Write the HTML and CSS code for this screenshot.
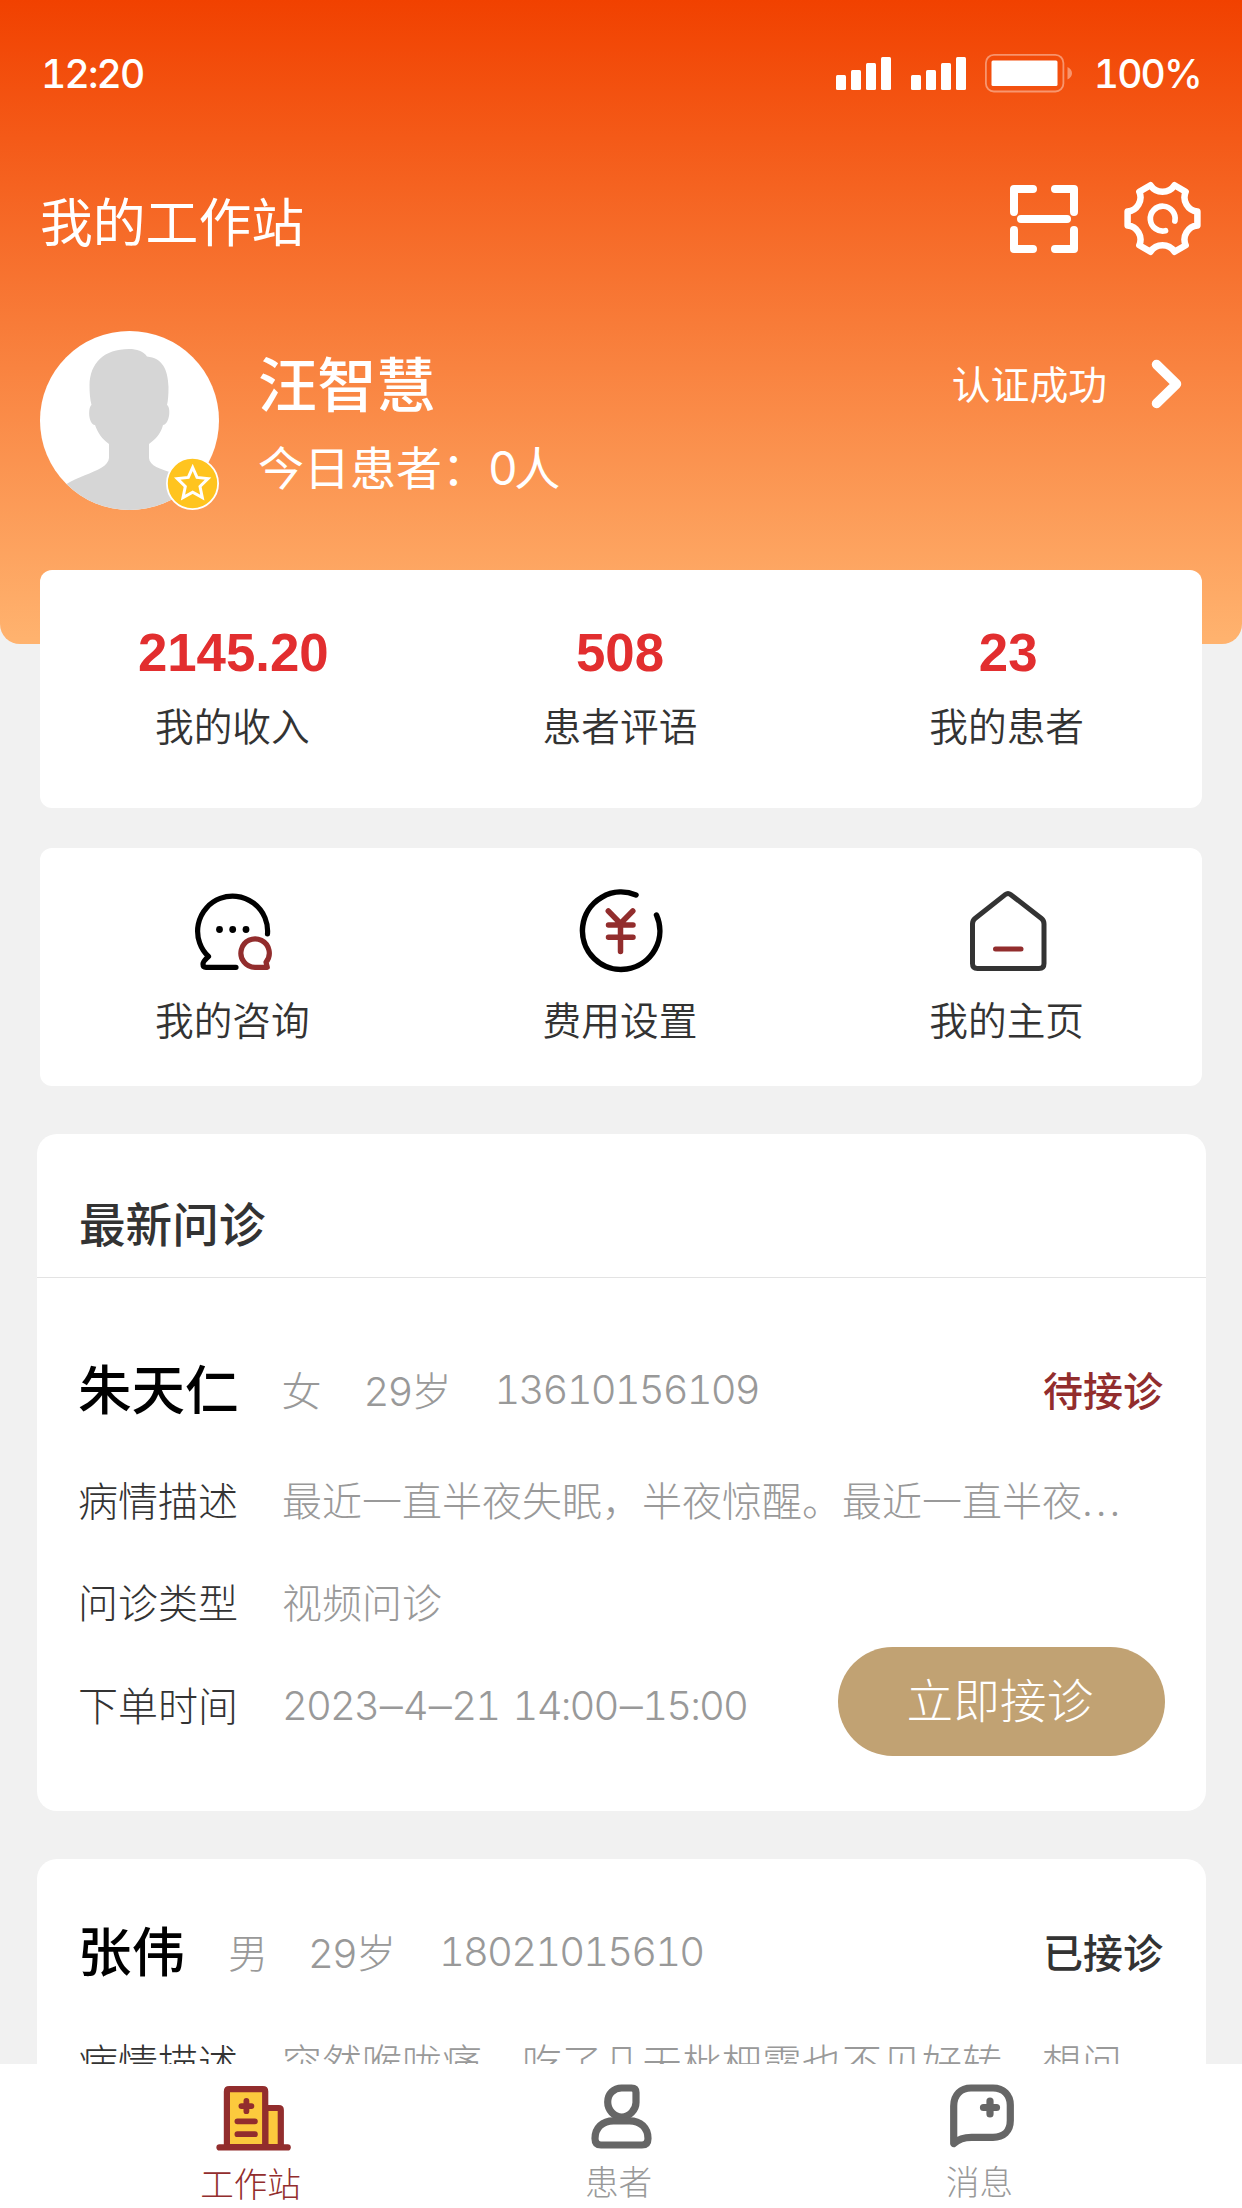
FILE: index.html
```html
<!DOCTYPE html>
<html lang="zh-CN">
<head>
<meta charset="utf-8">
<title>我的工作站</title>
<link rel="stylesheet" href="styles.css">
</head>
<body>
<div class="app">
  <header class="hero">
    <div class="status">
      <span class="time">12:20</span>
      <div class="status-right">
        <svg width="130" height="33" viewBox="0 0 130 33" fill="#fff">
          <g id="bars"><rect y="18" width="10" height="15" rx="1.5"/><rect x="15" y="13" width="10" height="20" rx="1.5"/><rect x="30" y="6" width="10" height="27" rx="1.5"/><rect x="45" width="10" height="33" rx="1.5"/></g>
          <use href="#bars" x="75"/>
        </svg>
        <svg class="battery" width="89" height="39" viewBox="0 0 89 39">
          <rect x=".9" y=".9" width="77.5" height="36.6" rx="8" fill="none" stroke="#fff" stroke-opacity=".4" stroke-width="1.8"/>
          <rect x="6.5" y="6.5" width="66" height="25.5" rx="1.5" fill="#fff"/>
          <path d="M82.5 13c6 2.500 6 10 0 12.500z" fill="#fff" fill-opacity=".4"/>
        </svg>
        <span class="percent">100%</span>
      </div>
    </div>
    <div class="titlebar">
      <h1>我的工作站</h1>
      <div class="actions">
        <svg width="70" height="70" viewBox="0 0 70 70" fill="none" stroke="#fff" stroke-width="8" stroke-linecap="round" stroke-linejoin="round">
          <path d="M5 28V5H24M46 5H65V28M65 46V65H46M24 65H5V46M12 35H58"/>
        </svg>
        <svg width="78" height="76" viewBox="-39.500 -37.500 78 76" fill="none" stroke="#fff" stroke-width="6.500" stroke-linecap="round" stroke-linejoin="round">
          <path d="M12-33.300L23.200-26.800A14.200 14.200 0 0 0 34.900-7V7A14.200 14.200 0 0 0 23.200 26.800L12 33.300A14.300 14.300 0 0 0-12 33.300L-23.200 26.800A14.200 14.200 0 0 0-34.900 7V-7A14.200 14.200 0 0 0-23.200-26.800L-12-33.300A14.300 14.300 0 0 0 12-33.300z"/>
          <path d="M12.400 2.500A12.400 12.400 0 1 0 3 12.200" stroke-width="5.700"/>
        </svg>
      </div>
    </div>
    <div class="profile">
      <div class="avatar">
        <svg width="179" height="179" viewBox="0 0 179 179">
          <defs><clipPath id="round"><circle cx="89.500" cy="89.500" r="89.500"/></clipPath></defs>
          <circle cx="89.500" cy="89.500" r="89.500" fill="#fff"/>
          <path clip-path="url(#round)" fill="#d6d6d6" d="M89 18C97 18 103 20 107 25.500C122 27 128 38 128.500 56C128.500 64 128 70 127 74C131 76 130 93 123 94C121 102 116 108 109 113V127C110 143 152 138 165 166V179H14V166C24 144 68 143 69 127V113C62 108 58 102 55 94C48 93 48 76 51.500 74C50 68 49.500 62 49.500 54C50 32 64 18 89 18z"/>
        </svg>
        <svg class="badge" width="53" height="53" viewBox="0 0 53 53">
          <circle cx="26.500" cy="26.500" r="25.600" fill="#ffc41f" stroke="#fff" stroke-width="1.800"/>
          <path d="M26.700 10.500L31 20.400L42 21.600L34 29.500L36.300 40.500L26.700 35.200L17 40.500L19.300 29.500L11.300 21.600L22.300 20.400z" fill="none" stroke="#fff" stroke-width="3"/>
        </svg>
      </div>
      <div class="who">
        <div class="doctor">汪智慧</div>
        <div class="today">今日患者：<span class="num">0</span>人</div>
      </div>
      <div class="cert">
        <span>认证成功</span>
        <svg width="34" height="52" viewBox="0 0 34 52" fill="none" stroke="#fff" stroke-width="9.500" stroke-linecap="round" stroke-linejoin="round"><path d="M6.500 6.500L26.500 26L6.500 45.500"/></svg>
      </div>
    </div>
  </header>

  <section class="panel stats">
    <div class="cell"><strong>2145.20</strong><span>我的收入</span></div>
    <div class="cell"><strong>508</strong><span>患者评语</span></div>
    <div class="cell"><strong class="count">23</strong><span>我的患者</span></div>
  </section>

  <section class="panel tools">
    <div class="cell">
      <svg width="84" height="84" viewBox="191 888 84 84" fill="none" stroke-width="5.200" stroke-linecap="round" stroke-linejoin="round">
        <path stroke="#000" d="M267.500 933A35 35 0 1 0 208.500 955.500C205 959 203 960.500 203 963Q203 966.300 206 966.300H236"/>
        <g fill="#000"><circle cx="219.500" cy="928.500" r="3.400"/><circle cx="232.700" cy="928.500" r="3.400"/><circle cx="246" cy="928.500" r="3.400"/></g>
        <path stroke="#922d2d" d="M255 966.300A14.200 14.200 0 1 1 266 961.200L267.300 966.300z"/>
      </svg>
      <span>我的咨询</span>
    </div>
    <div class="cell">
      <svg width="90" height="84" viewBox="575.500 888.500 90 84" fill="none" stroke-width="5.500" stroke-linecap="round" stroke-linejoin="round">
        <path stroke="#000" d="M636.500 894.500A38.700 38.700 0 1 0 657 914.500"/>
        <path stroke="#922d2d" d="M608.800 910.500L621 923L633.300 910.500M609 924.600H633.500M609 936.700H633.500M621 923V951"/>
      </svg>
      <span>费用设置</span>
    </div>
    <div class="cell">
      <svg width="84" height="84" viewBox="965.500 889 84 84" fill="none" stroke-width="5" stroke-linecap="round" stroke-linejoin="round">
        <path stroke="#333" d="M1006 894.400Q1008.500 892.500 1011 894.400L1042 918.500Q1044.500 920.500 1044.500 924V963.500Q1044.500 968.500 1039.500 968.500H978Q973 968.500 973 963.500V924Q973 920.500 975.500 918.500z"/>
        <path stroke="#922d2d" d="M996 949H1021.500"/>
      </svg>
      <span>我的主页</span>
    </div>
  </section>

  <section class="card first">
    <h2>最新问诊</h2>
    <div class="patient">
      <b>朱天仁</b><span class="sex">女</span><span class="age"><span class="num">29</span>岁</span><span class="num">13610156109</span>
      <em class="pending">待接诊</em>
    </div>
    <div class="line"><label>病情描述</label><p>最近一直半夜失眠，半夜惊醒。最近一直半夜<span class="dots">...</span></p></div>
    <div class="line type"><label>问诊类型</label><p>视频问诊</p></div>
    <div class="line order"><label>下单时间</label><p class="date num">2023<i>–</i>4<i>–</i>21 14:00<i>–</i>15:00</p><button>立即接诊</button></div>
  </section>

  <section class="card second">
    <div class="patient">
      <b>张伟</b><span class="sex">男</span><span class="age"><span class="num">29</span>岁</span><span class="num">18021015610</span>
      <em>已接诊</em>
    </div>
    <div class="line"><label>病情描述</label><p>突然喉咙痛，吃了几天枇杷露也不见好转，想问</p></div>
  </section>

  <nav class="tabs">
    <div class="tab active">
      <svg width="76" height="68" viewBox="214.500 2084 76 68" stroke="#922d2d" stroke-width="6.200" stroke-linecap="round" stroke-linejoin="round">
        <path fill="#fcca3d" d="M264.700 2108H278.300Q280.300 2108 280.300 2110V2147H264.700z"/>
        <path fill="#fcca3d" d="M226.400 2147V2091.500Q226.400 2089.200 228.800 2089.200H262.300Q264.700 2089.200 264.700 2091.500V2147z"/>
        <path fill="none" d="M219 2147.400H287.200"/>
        <path fill="none" stroke-width="5.800" d="M245.900 2101V2111.200M240.900 2106.100H250.900M236.900 2121.300H254.400M236.900 2134.200H254.400"/>
      </svg>
      <span>工作站</span>
    </div>
    <div class="tab">
      <svg width="76" height="68" viewBox="582.500 2083.500 76 68" fill="none" stroke="#666" stroke-width="7.200" stroke-linecap="round" stroke-linejoin="round">
        <path d="M621 2088.500H631Q635.500 2088.500 635.500 2093V2103C635.500 2110 629 2117.500 621.300 2117.500C613.500 2117.500 607.200 2110.500 607.200 2102.500C607.200 2094 613.500 2088.500 621 2088.500z"/>
        <path d="M600.500 2145.500Q594.500 2145.500 594.500 2139C594.500 2128.500 602 2121.300 613 2121.300H629C640 2121.300 647.500 2128.500 647.500 2139Q647.500 2145.500 641.500 2145.500z"/>
      </svg>
      <span>患者</span>
    </div>
    <div class="tab">
      <svg width="76" height="68" viewBox="944 2083.500 76 68" fill="none" stroke="#666" stroke-width="7.200" stroke-linecap="round" stroke-linejoin="round">
        <path d="M953.700 2144V2106.500C953.700 2095 961 2088.500 971 2088.500H993C1003.500 2088.500 1010.300 2095.500 1010.300 2105.500V2121C1010.300 2131.500 1003.500 2137.800 993 2137.800H971.500C963.500 2137.800 958 2140 953.700 2144z"/>
        <path d="M990 2101.500V2114.500M983.500 2108H996.500"/>
      </svg>
      <span>消息</span>
    </div>
  </nav>
</div>
</body>
</html>
```
FILE: styles.css
```css
* { box-sizing: border-box; margin: 0; padding: 0; }

body {
  font-family: Inter, "Noto Sans CJK SC", sans-serif;
  font-feature-settings: "tnum";
  background: #f1f1f1;
  color: #333;
}

svg { display: block; flex: none; }

.num { letter-spacing: -1.85px; }

.app {
  width: 1242px;
  height: 2208px;
  overflow: hidden;
  display: flex;
  flex-direction: column;
}

.hero {
  flex: none;
  height: 644px;
  padding: 0 41px 0 40px;
  border-radius: 0 0 20px 20px;
  background: linear-gradient(#f14100, #f87b38 50%, #ffb36f);
  color: #fff;
}

.status {
  height: 146px;
  display: flex;
  align-items: center;
  justify-content: space-between;
  font-size: 39px;
  font-weight: 500;
  letter-spacing: -1.8px;
}
.time { padding-left: 1px; }
.status-right { display: flex; align-items: center; }
.battery { margin-left: 19px; }
.percent { margin-left: 20px; }

.titlebar {
  height: 146px;
  display: flex;
  align-items: center;
  justify-content: space-between;
}
.titlebar h1 { font-size: 52.8px; font-weight: 400; line-height: 60px; padding: 7px 0 0 0; }
.actions { display: flex; align-items: center; gap: 44px; }

.profile { display: flex; padding-top: 39px; }
.avatar { position: relative; width: 179px; height: 179px; }
.badge { position: absolute; right: 0; bottom: 0; }
.who { margin-left: 39px; }
.doctor { font-size: 59.2px; font-weight: 500; line-height: 70px; margin-top: 20px; }
.today { font-size: 46px; font-weight: 400; line-height: 54px; margin-top: 20px; }
.today .num { letter-spacing: -3.5px; }
.cert {
  margin-left: auto;
  height: 106px;
  display: flex;
  align-items: center;
  gap: 43px;
  font-size: 38.8px;
  font-weight: 400;
  padding-right: 17px;
}
.cert span { padding-bottom: 4px; }

.panel {
  flex: none;
  width: 1162px;
  height: 238px;
  margin: 0 auto;
  padding-right: 2px;
  border-radius: 12px;
  background: #fff;
  display: grid;
  grid-template-columns: repeat(3, 1fr);
}
.stats { margin-top: -74px; }
.tools { margin-top: 40px; }
.cell { display: flex; flex-direction: column; align-items: center; }
.cell span { font-size: 38.7px; font-weight: 350; line-height: 50px; }
.cell:first-child span { margin-right: 2px; }
.stats strong {
  font: bold 52.8px/60px "Liberation Sans", sans-serif;
  color: #e22e2f;
  margin: 53px 0 19px;
}
.stats .count { padding-left: 3px; }
.tools svg { margin: 41px 0 23px; }

.card {
  flex: none;
  width: 1169px;
  margin: 48px 0 0 37px;
  border-radius: 20px;
  background: #fff;
}
.first { height: 677px; }
.second { height: 360px; }
.card h2 {
  height: 144px;
  padding: 61px 42px 0;
  border-bottom: 1px solid #e3e3e3;
  font-size: 46.6px;
  font-weight: 500;
  line-height: 60px;
}
.patient {
  display: flex;
  align-items: center;
  height: 60px;
  margin: 81px 43px 0 41px;
  font-size: 40px;
  font-weight: 300;
  color: #999;
}
.second .patient { margin-top: 62px; }
.patient b {
  font-size: 53.5px;
  font-weight: 500;
  color: #000;
  margin-right: 43px;
  padding-bottom: 5px;
}
.patient .sex { margin-right: 42px; }
.patient .age { margin-right: 43px; }
.second .sex { margin-right: 40px; }
.patient em { margin-left: auto; font-style: normal; font-weight: 500; color: #333; }
.patient em.pending { color: #922d2d; }

.line {
  display: flex;
  align-items: center;
  height: 60px;
  margin: 50px 41px 0 41px;
  font-size: 40px;
  font-weight: 300;
}
.line label { width: 204px; }
.line p { color: #999; white-space: nowrap; }
.line .dots { letter-spacing: 3px; }
.line .date { word-spacing: 4.5px; padding-top: 2px; }
.line .date i {
  display: inline-block;
  width: 24.5px;
  font-style: normal;
  text-align: center;
  transform: scaleX(1.15);
}
.line.type { margin-top: 42px; }
.line.order { margin-top: 43px; }
.line button {
  width: 327px;
  height: 109px;
  margin: -6px 0 0 auto;
  padding: 0 3px 7px 0;
  border: 0;
  border-radius: 55px;
  background: #c1a273;
  color: #fff;
  font: inherit;
  font-size: 46.7px;
}

.tabs {
  flex: none;
  height: 144px;
  margin-top: -155px;
  padding-left: 67px;
  position: relative;
  background: #fff;
  display: grid;
  grid-template-columns: 367px 369px 353px;
}
.tab {
  display: flex;
  flex-direction: column;
  align-items: center;
  padding-top: 19px;
  font-size: 33.6px;
  font-weight: 300;
  line-height: 40px;
  color: #999;
}
.tab svg { margin-left: 4px; }
.tab span { margin-top: 12px; }
.tab.active { color: #922d2d; padding-top: 20px; }
.tab.active span { margin-top: 13px; }
```
